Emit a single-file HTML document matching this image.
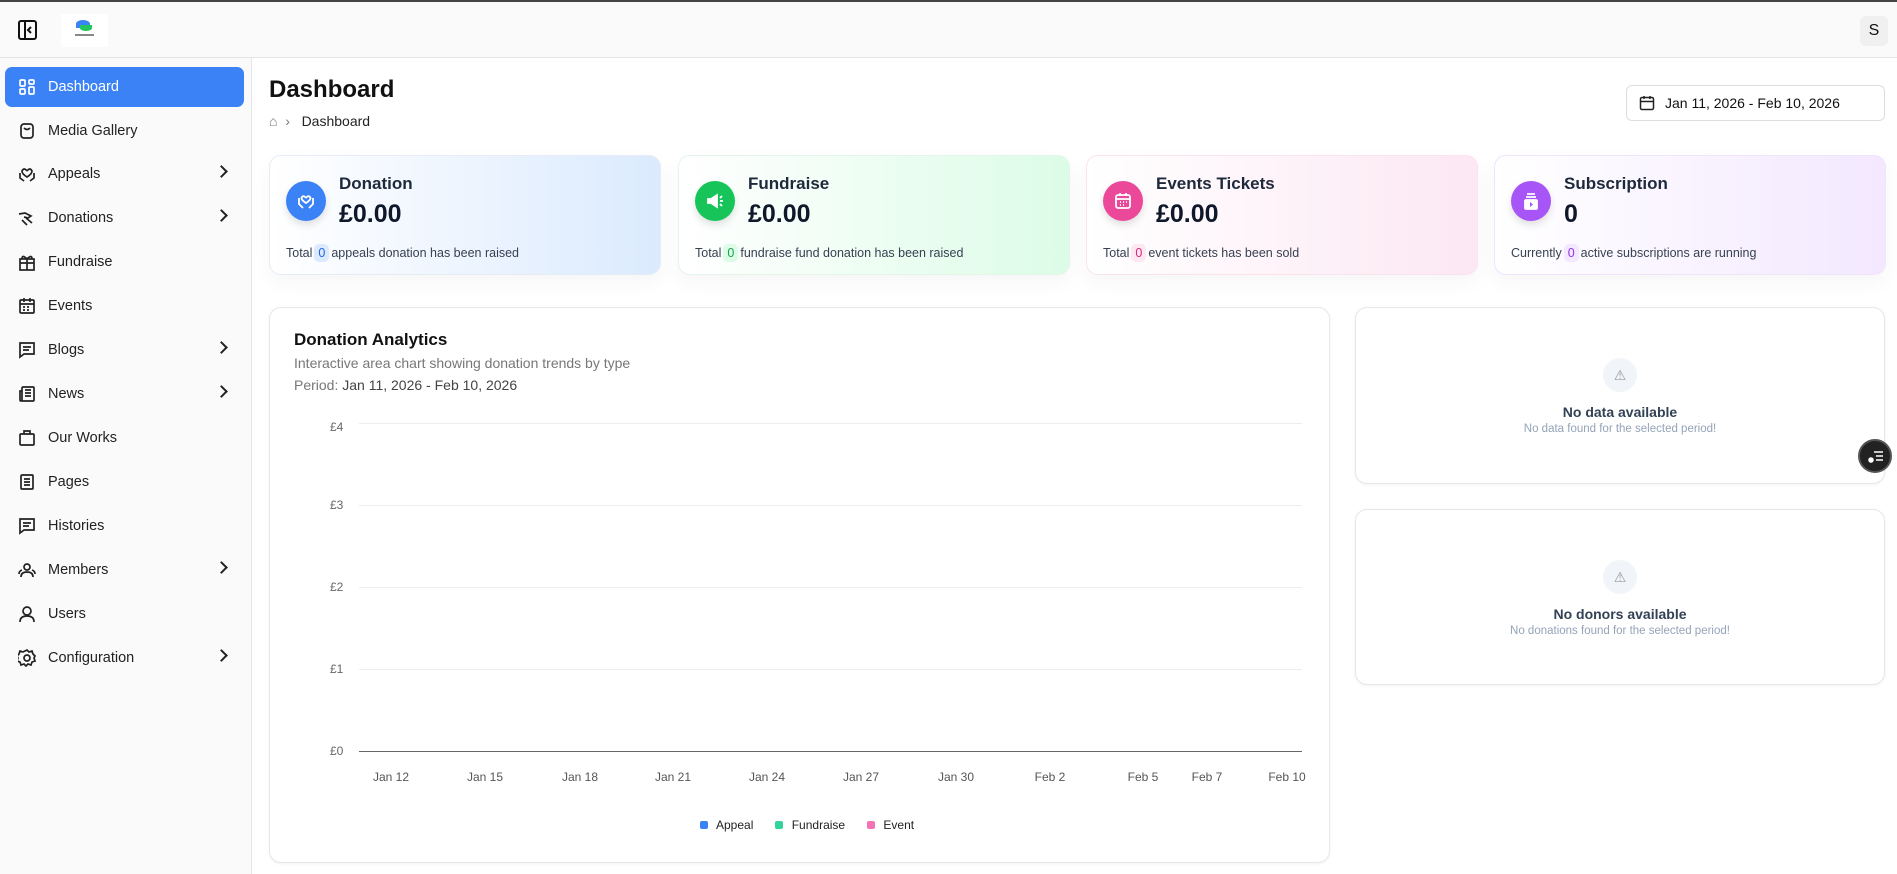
<!DOCTYPE html>
<html><head><meta charset="utf-8"><style>
*{box-sizing:border-box;margin:0;padding:0}
body{width:1897px;height:874px;overflow:hidden;background:#fff;font-family:"Liberation Sans",sans-serif;color:#111;position:relative}
.top{position:absolute;left:0;top:0;width:1897px;height:58px;background:#fafafa;border-top:2px solid #444;border-bottom:1px solid #e5e5e5}
.side{position:absolute;left:0;top:58px;width:252px;height:816px;background:#fafafa;border-right:1px solid #e5e5e5}
.nav{position:absolute;left:5px;width:239px;height:40px;border-radius:7px;display:flex;align-items:center;padding-left:13px;font-size:14.5px;color:#222}
.nav svg{width:18px;height:18px;margin-right:12px;fill:none;stroke:#222;stroke-width:1.7}
.nav.act{background:#3b82f6;color:#fff}.nav.act svg{stroke:#fff}
.chev{position:absolute;right:18px;top:13px;width:9px;height:9px;border-right:2px solid #222;border-top:2px solid #222;transform:rotate(45deg)}
.card{position:absolute;top:155px;width:392px;height:120px;border-radius:12px;border:1px solid #e6ecf5;box-shadow:0 8px 20px rgba(0,0,0,.04)}
.ic{position:absolute;left:16px;top:25px;width:40px;height:40px;border-radius:50%;box-shadow:0 4px 8px rgba(0,0,0,.12)}
.ic svg{position:absolute;left:10px;top:10px;width:20px;height:20px;fill:none;stroke:#fff;stroke-width:1.8}
.ct{position:absolute;left:69px;top:18px;font-size:17px;color:#1e293b;font-weight:bold}
.cv{position:absolute;left:69px;top:44px;font-size:25px;font-weight:bold;color:#0f172a}
.cs{position:absolute;left:16px;top:88px;font-size:12.5px;color:#374151}
.b{display:inline-block;padding:2px 4px;border-radius:5px;margin:0 2px}
.box{position:absolute;background:#fff;border:1px solid #e5e7eb;border-radius:12px;box-shadow:0 1px 3px rgba(0,0,0,.05)}
.yl{position:absolute;left:330px;font-size:12px;color:#666}
.gl{position:absolute;left:359px;width:943px;height:1px;background:#eee}
.xl{position:absolute;top:770px;font-size:12px;color:#555;transform:translateX(-50%)}
.emp{position:absolute;left:0;width:100%;text-align:center}
.wi{width:34px;height:34px;border-radius:50%;background:#f1f4f8;margin:0 auto;display:flex;align-items:center;justify-content:center;color:#999;font-size:14px}
</style></head><body>
<div class="top">
<svg style="position:absolute;left:18px;top:18px" width="19" height="20" viewBox="0 0 19 20" fill="none" stroke="#111" stroke-width="2"><rect x="1" y="1" width="17" height="18" rx="2"/><line x1="7" y1="1" x2="7" y2="19"/><path d="M13 7l-3 3 3 3"/></svg>
<div style="position:absolute;left:61px;top:12px;width:47px;height:33px;background:#fff"><div style="position:absolute;left:15px;top:6px;width:14px;height:8px;background:#3b82f6;border-radius:50% 50% 0 0"></div><div style="position:absolute;left:19px;top:11px;width:12px;height:6px;background:#22c55e;border-radius:0 0 50% 50%"></div><div style="position:absolute;left:14px;top:20px;width:19px;height:2px;background:#888"></div></div>
<div style="position:absolute;left:1860px;top:14px;width:28px;height:30px;background:#f0f0f0;border-radius:6px;text-align:center;line-height:30px;font-size:16px">S</div>
</div>
<div class="side"></div>
<div class="nav act" style="top:67px"><svg viewBox="0 0 18 18"><rect x="2" y="2" width="5" height="6" rx="1"/><rect x="11" y="2" width="5" height="4" rx="1"/><rect x="2" y="11" width="5" height="5" rx="1"/><rect x="11" y="9" width="5" height="7" rx="1"/></svg>Dashboard</div>
<div class="nav" style="top:111px"><svg viewBox="0 0 18 18"><rect x="3" y="2" width="12" height="14" rx="3"/><path d="M6 6q3 3 6 0"/></svg>Media Gallery</div>
<div class="nav" style="top:154px"><svg viewBox="0 0 18 18"><path d="M9 6q-3-4-5 0 0 3 5 6 5-3 5-6-2-4-5 0M2 8v5l4 3M16 8v5l-4 3"/></svg>Appeals<span class="chev"></span></div>
<div class="nav" style="top:198px"><svg viewBox="0 0 18 18"><path d="M1 5l6-1 6 3-3 2-4-1M8 9l6 5M4 11l5 5"/></svg>Donations<span class="chev"></span></div>
<div class="nav" style="top:242px"><svg viewBox="0 0 18 18"><rect x="2" y="6" width="14" height="11"/><path d="M2 10h14M9 6v11M9 6q-5-5-5 0M9 6q5-5 5 0"/></svg>Fundraise</div>
<div class="nav" style="top:286px"><svg viewBox="0 0 18 18"><rect x="2" y="3" width="14" height="13" rx="1"/><path d="M2 7h14M6 1v4M12 1v4M5 10h2M9 10h2M5 13h2M9 13h2"/></svg>Events</div>
<div class="nav" style="top:330px"><svg viewBox="0 0 18 18"><path d="M2 2h14v11H6l-4 3z"/><path d="M5 6h8M5 9h6"/></svg>Blogs<span class="chev"></span></div>
<div class="nav" style="top:374px"><svg viewBox="0 0 18 18"><rect x="4" y="2" width="12" height="14" rx="1"/><path d="M4 6H2v9a1 1 0 002 0M7 5h6M7 8h6M7 11h6"/></svg>News<span class="chev"></span></div>
<div class="nav" style="top:418px"><svg viewBox="0 0 18 18"><rect x="2" y="5" width="14" height="11" rx="1"/><path d="M6 5V2h6v3"/></svg>Our Works</div>
<div class="nav" style="top:462px"><svg viewBox="0 0 18 18"><rect x="3" y="2" width="12" height="14" rx="1"/><path d="M6 6h6M6 9h6M6 12h6"/></svg>Pages</div>
<div class="nav" style="top:506px"><svg viewBox="0 0 18 18"><path d="M2 2h14v11H6l-4 3z"/><path d="M5 6h8M5 9h6"/></svg>Histories</div>
<div class="nav" style="top:550px"><svg viewBox="0 0 18 18"><circle cx="9" cy="6" r="3"/><path d="M3 16q0-5 6-5t6 5M1 13q0-3 3-4M17 13q0-3-3-4"/></svg>Members<span class="chev"></span></div>
<div class="nav" style="top:594px"><svg viewBox="0 0 18 18"><circle cx="9" cy="6" r="4"/><path d="M2 17q0-6 7-6t7 6"/></svg>Users</div>
<div class="nav" style="top:638px"><svg viewBox="0 0 18 18"><circle cx="9" cy="9" r="3"/><path d="M9 1l2 2 3-1 1 3 2 2-1 2 1 3-3 1-1 3-3-1-2 2-2-2-3 1-1-3-3-1 1-3-1-2 2-2 1-3 3 1z"/></svg>Configuration<span class="chev"></span></div>

<div style="position:absolute;left:269px;top:76px;font-size:24px;font-weight:bold">Dashboard</div>
<div style="position:absolute;left:269px;top:113px;font-size:14px;color:#222"><span style="color:#777">⌂ &nbsp;›</span>&nbsp;&nbsp; Dashboard</div>
<div style="position:absolute;left:1626px;top:85px;width:259px;height:36px;border:1px solid #ddd;border-radius:6px;font-size:14px;padding:9px 0 0 38px">Jan 11, 2026 - Feb 10, 2026
<svg style="position:absolute;left:12px;top:9px" width="16" height="16" viewBox="0 0 16 16" fill="none" stroke="#222" stroke-width="1.5"><rect x="1.5" y="2.5" width="13" height="12" rx="1.5"/><path d="M1.5 6.5h13M5 1v3M11 1v3"/></svg></div>

<div class="card" style="left:269px;background:linear-gradient(90deg,#fff,#dbeafe)"><div class="ic" style="background:#3b82f6"><svg viewBox="0 0 20 20"><path d="M10 7q-2-3-4-1t4 6q6-4 4-6t-4 1M3 7v6l4 4M17 7v6l-4 4"/></svg></div><div class="ct">Donation</div><div class="cv">£0.00</div><div class="cs">Total<span class="b" style="background:#dbeafe;color:#2563eb">0</span>appeals donation has been raised</div></div>
<div class="card" style="left:678px;background:linear-gradient(90deg,#fff,#dcfce7);border-color:#e3f5e9"><div class="ic" style="background:#16c45a"><svg viewBox="0 0 20 20"><path d="M3 8h3l6-4v12l-6-4H3zM15 7l2-2M15 10h3M15 13l2 2" fill="#fff"/></svg></div><div class="ct">Fundraise</div><div class="cv">£0.00</div><div class="cs">Total<span class="b" style="background:#dcfce7;color:#16a34a">0</span>fundraise fund donation has been raised</div></div>
<div class="card" style="left:1086px;background:linear-gradient(90deg,#fff,#fce7f3);border-color:#fbe3ee"><div class="ic" style="background:#ec4899"><svg viewBox="0 0 20 20"><rect x="3" y="4" width="14" height="13" rx="2"/><path d="M3 8h14M7 2v3M13 2v3M7 11h1M10 11h1M13 11h1M7 14h1M10 14h1"/></svg></div><div class="ct">Events Tickets</div><div class="cv">£0.00</div><div class="cs">Total<span class="b" style="background:#fce7f3;color:#db2777">0</span>event tickets has been sold</div></div>
<div class="card" style="left:1494px;background:linear-gradient(90deg,#fff,#f3e8ff);border-color:#efe4fb"><div class="ic" style="background:#a855f7"><svg viewBox="0 0 20 20"><path d="M6 3h8M5 6h10"/><rect x="4" y="9" width="12" height="9" rx="1" fill="#fff"/><path d="M9 11v5l3-2.5z" fill="#a855f7" stroke="none"/></svg></div><div class="ct">Subscription</div><div class="cv">0</div><div class="cs">Currently<span class="b" style="background:#f3e8ff;color:#9333ea">0</span>active subscriptions are running</div></div>

<div class="box" style="left:269px;top:307px;width:1061px;height:556px"></div>
<div style="position:absolute;left:294px;top:330px;font-size:17px;font-weight:bold">Donation Analytics</div>
<div style="position:absolute;left:294px;top:355px;font-size:14px;color:#777">Interactive area chart showing donation trends by type</div>
<div style="position:absolute;left:294px;top:377px;font-size:14px;color:#777">Period: <span style="color:#444">Jan 11, 2026 - Feb 10, 2026</span></div>
<div class="gl" style="top:423px"></div><div class="gl" style="top:505px"></div><div class="gl" style="top:587px"></div><div class="gl" style="top:669px"></div><div class="gl" style="top:751px;background:#666"></div>
<div class="yl" style="top:420px">£4</div><div class="yl" style="top:498px">£3</div><div class="yl" style="top:580px">£2</div><div class="yl" style="top:662px">£1</div><div class="yl" style="top:744px">£0</div>
<div class="xl" style="left:391px">Jan 12</div><div class="xl" style="left:485px">Jan 15</div><div class="xl" style="left:580px">Jan 18</div><div class="xl" style="left:673px">Jan 21</div><div class="xl" style="left:767px">Jan 24</div><div class="xl" style="left:861px">Jan 27</div><div class="xl" style="left:956px">Jan 30</div><div class="xl" style="left:1050px">Feb 2</div><div class="xl" style="left:1143px">Feb 5</div><div class="xl" style="left:1207px">Feb 7</div><div class="xl" style="left:1287px">Feb 10</div>
<div style="position:absolute;left:700px;top:818px;font-size:12px;color:#222;word-spacing:1px"><span style="display:inline-block;width:8px;height:8px;background:#3b82f6;border-radius:2px"></span>&nbsp; Appeal &nbsp;&nbsp;&nbsp; <span style="display:inline-block;width:8px;height:8px;background:#34d399;border-radius:2px"></span>&nbsp; Fundraise &nbsp;&nbsp;&nbsp; <span style="display:inline-block;width:8px;height:8px;background:#f472b6;border-radius:2px"></span>&nbsp; Event</div>

<div class="box" style="left:1355px;top:307px;width:530px;height:177px"><div class="emp" style="top:50px"><div class="wi">⚠</div><div style="margin-top:12px;font-size:14px;font-weight:bold;color:#334155">No data available</div><div style="font-size:11.5px;color:#94a3b8;margin-top:3px">No data found for the selected period!</div></div></div>
<div class="box" style="left:1355px;top:509px;width:530px;height:176px"><div class="emp" style="top:50px"><div class="wi">⚠</div><div style="margin-top:12px;font-size:14px;font-weight:bold;color:#334155">No donors available</div><div style="font-size:11.5px;color:#94a3b8;margin-top:3px">No donations found for the selected period!</div></div></div>
<div style="position:absolute;left:1858px;top:439px;width:34px;height:34px;border-radius:50%;background:#222;border:2px solid #555"><svg style="position:absolute;left:8px;top:9px" width="16" height="14" viewBox="0 0 16 14" fill="none" stroke="#fff" stroke-width="1.5"><path d="M6 2h9M8 6h7M8 10h7"/><circle cx="3" cy="10" r="2" fill="#fff"/></svg></div>
</body></html>
